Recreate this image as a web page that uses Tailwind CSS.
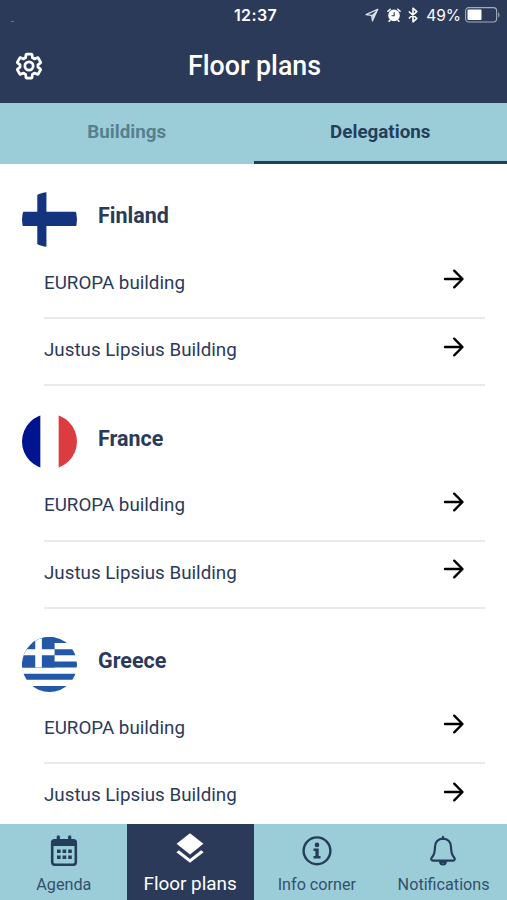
<!DOCTYPE html>
<html lang="en">
  <head>
    <meta charset="UTF-8" />
    <meta name="viewport" content="width=device-width, initial-scale=1.0" />
    <script src="https://cdn.jsdelivr.net/npm/@tailwindcss/browser@4"></script>
    <title>Floor plans</title>
  </head>
  <body>
    <div class="flex flex-col h-[900px] w-[507px] overflow-hidden bg-white font-['Roboto',sans-serif] text-[#2c3a5a]">
      <!-- Header -->
      <header class="h-[103px] shrink-0 bg-[#2c3a5a] text-white">
        <div class="grid grid-cols-[1fr_auto_1fr] items-center h-[30px] pl-[11px] pr-[7px]">
          <span class="w-[3px] h-px mt-3 bg-white/30"></span>
          <span class="font-['Inter',sans-serif] font-semibold text-[16px] tracking-[0.4px]">12:37</span>
          <div class="flex items-center justify-end">
            <svg class="w-[14px] h-[14px] mr-2" viewBox="0 0 14 14" fill="none" stroke="#dfe3ea" stroke-width="1.2" stroke-linejoin="round">
              <path d="M12.8 1.2 1 6.6l5.6.8.8 5.6z" />
              <path d="M12.8 1.2 7 7l.6 5z" fill="#dfe3ea" stroke="none" />
            </svg>
            <svg class="w-[14px] h-[14px] mr-[7px]" viewBox="0 0 14 14" fill="none" stroke="#fff" stroke-linecap="round">
              <circle cx="7" cy="7.4" r="5.8" fill="#fff" stroke="none" />
              <path d="M.9 3.2 3.2 1.2M13.1 3.2l-2.3-2M3 12.2l-.9 1.1M11 12.2l.9 1.1" stroke-width="1.5" />
              <path d="M7.2 4.6v3.1H5" stroke="#2c3a5a" stroke-width="1.1" />
            </svg>
            <svg class="w-[10px] h-[16px] mr-[8px]" viewBox="0 0 10 16" fill="none" stroke="#fff" stroke-width="1.6" stroke-linejoin="round">
              <path d="M.8 4.5 8.8 11.3 5 14.8V1.2l3.8 3.5L.8 11.5" />
            </svg>
            <span class="font-['Inter',sans-serif] text-[15.5px] mr-[4px] pt-px">49%</span>
            <svg class="w-[35px] h-[16px]" viewBox="0 0 35 16" fill="none">
              <rect x=".6" y=".6" width="31" height="14.4" rx="3.2" stroke="#a3abbc" stroke-width="1.1" />
              <rect x="2.5" y="2.6" width="14" height="10.5" rx="1" fill="#fff" />
              <path d="M33.2 5.2c1.6.8 1.6 4.4 0 5.2z" fill="#a3abbc" />
            </svg>
          </div>
        </div>
        <div class="grid grid-cols-[1fr_auto_1fr] items-center h-[72px] px-[14px]">
          <svg class="w-[30px] h-[30px]" viewBox="0 0 24 24" fill="none" stroke="#fff" stroke-width="2.2" stroke-linejoin="round">
            <path d="M19.14 12.94c.04-.3.06-.61.06-.94 0-.32-.02-.64-.07-.94l2.03-1.58c.18-.14.23-.41.12-.61l-1.92-3.32c-.12-.22-.37-.29-.59-.22l-2.39.96c-.5-.38-1.03-.7-1.62-.94l-.36-2.54c-.04-.24-.24-.41-.48-.41h-3.84c-.24 0-.43.17-.47.41l-.36 2.54c-.59.24-1.13.57-1.62.94l-2.39-.96c-.22-.08-.47 0-.59.22L2.74 8.87c-.12.21-.08.47.12.61l2.03 1.58c-.05.3-.09.63-.09.94s.02.64.07.94l-2.03 1.58c-.18.14-.23.41-.12.61l1.92 3.32c.12.22.37.29.59.22l2.39-.96c.5.38 1.03.7 1.62.94l.36 2.54c.05.24.24.41.48.41h3.84c.24 0 .44-.17.47-.41l.36-2.54c.59-.24 1.13-.56 1.62-.94l2.39.96c.22.08.47 0 .59-.22l1.92-3.32c.12-.22.07-.47-.12-.61z" />
            <circle cx="12" cy="12" r="3.3" />
          </svg>
          <h1 class="text-[26.8px] leading-8 pb-px pl-[2px] font-medium">Floor plans</h1>
        </div>
      </header>

      <!-- Tabs -->
      <div class="grid grid-cols-2 h-[61px] shrink-0 bg-[#9bcdd9] text-[18.8px] font-bold text-center">
        <button class="pb-[3px] text-[#56808f]">Buildings</button>
        <button class="border-b-3 border-[#243d5b] text-[#243d5b]">Delegations</button>
      </div>

      <!-- Delegations -->
      <main class="flex-1 min-h-0 overflow-hidden pl-[22px] pr-[22px]"></main>

      <!-- Bottom navigation -->
      <nav class="grid grid-cols-4 h-[76px] shrink-0 bg-[#9bcdd9] text-[16.2px] text-[#33506a]">
        <a class="flex flex-col items-center pt-[10px] pl-px">
          <svg class="w-[32px] h-[34px]" viewBox="0 0 32 34" fill="none" stroke="#243d5b">
            <rect x="4.2" y="6.3" width="23.6" height="24.4" rx="2.4" stroke-width="2.6" />
            <path d="M4 6h24v6H4z" fill="#243d5b" stroke="none" />
            <path d="M10.3 2.8V7M21.7 2.8V7" stroke-width="3.2" stroke-linecap="round" />
            <path d="M9 17.3h14.8M9 23.2h14.8" stroke-width="3.6" stroke-dasharray="3.6 2" />
          </svg>
          <span class="mt-[7px] leading-5">Agenda</span>
        </a>
        <a class="flex flex-col items-center pt-[7px] bg-[#2c3a5a] text-white text-[18.9px]">
          <svg class="w-[30px] h-[34px]" viewBox="0 0 30 34" fill="#fff">
            <path d="M15 2.2 28.4 12.8 15 23.4 1.6 12.8z" />
            <path d="M15 31.8 1.4 21.2l2.5-1.9L15 28l11.1-8.7 2.5 1.9z" />
          </svg>
          <span class="mt-[9px] leading-5">Floor plans</span>
        </a>
        <a class="flex flex-col items-center pt-[10px]">
          <svg class="w-[32px] h-[34px]" viewBox="0 0 32 34">
            <circle cx="16" cy="16.8" r="13.4" fill="none" stroke="#243d5b" stroke-width="2.4" />
            <circle cx="16" cy="10.9" r="2.3" fill="#243d5b" />
            <path d="M12.5 14.6h5.2v7.4h1.8v2.4h-7V22h1.900v-5h-1.900z" fill="#243d5b" />
          </svg>
          <span class="mt-[7px] leading-5">Info corner</span>
        </a>
        <a class="flex flex-col items-center pt-[10px]">
          <svg class="w-[32px] h-[34px] mr-px" viewBox="0 0 32 34" fill="none" stroke="#243d5b" stroke-width="2.2" stroke-linecap="round" stroke-linejoin="round">
            <path d="M16 2.9v2" />
            <path d="M16 4.7c-5 0-8 3.6-8 8.2 0 6-1.4 8.6-3.3 10.8-1 1.3-.4 3 1.3 3h20c1.7 0 2.3-1.7 1.3-3C25.4 21.5 24 18.9 24 12.9c0-4.6-3-8.2-8-8.2z" />
            <path d="M13.2 28c.2 3.3 5.4 3.3 5.6 0z" />
          </svg>
          <span class="mt-[7px] leading-5">Notifications</span>
        </a>
      </nav>
    </div>

    <script>
      const flags = {
        Finland: `
          <path fill="#fff" d="M0 0h54v54H0z"/>
          <path fill="#13347f" d="M15 0h9v54h-9zM0 19.5h54v14H0z"/>`,
        France: `
          <path fill="#fff" d="M0 0h54v54H0z"/>
          <path fill="#00148f" d="M0 0h18v54H0z"/>
          <path fill="#dc3c3f" d="M36 0h18v54H36z"/>`,
        Greece: `
          <path fill="#fff" d="M0 0h54v54H0z"/>
          <path fill="#2358a8" d="M0 0h54v6H0zM0 12h54v6H0zM0 24h54v6H0zM0 36h54v6H0zM0 48h54v6H0z"/>
          <path fill="#2358a8" d="M0 0h32v30H0z"/>
          <path fill="#fff" d="M13 0h6.500v30H13zM0 12h32v6H0z"/>`,
      };
      const buildings = ["EUROPA building", "Justus Lipsius Building"];

      // Components
      const showBuilding = (name) => `
        <li class="flex items-center justify-between h-[67.4px] pr-[20px] border-b-2 border-[#e9e9eb]">
          <span class="pb-[3px] text-[18.8px]">${name}</span>
          <svg class="w-[22px] h-[22px] mb-[10px]" viewBox="0 0 22 22" fill="none" stroke="#000" stroke-width="2.4" stroke-linecap="round" stroke-linejoin="round">
            <path d="M2 11h17M11.2 2.7l8.3 8.3-8.3 8.3"/>
          </svg>
        </li>`;

      const showCountry = (name) => `
        <section>
          <div class="flex items-center h-[87.7px] pt-[23px]">
            <svg class="w-[55px] h-[55px] rounded-full" viewBox="0 0 54 54">${flags[name]}</svg>
            <h2 class="pb-[6px] ml-[21px] text-[21.5px] font-bold">${name}</h2>
          </div>
          <ul class="ml-[22px]">${buildings.map(showBuilding).join("")}</ul>
        </section>`;

      document.querySelector("main").innerHTML = Object.keys(flags).map(showCountry).join("");
    </script>
  </body>
</html>
